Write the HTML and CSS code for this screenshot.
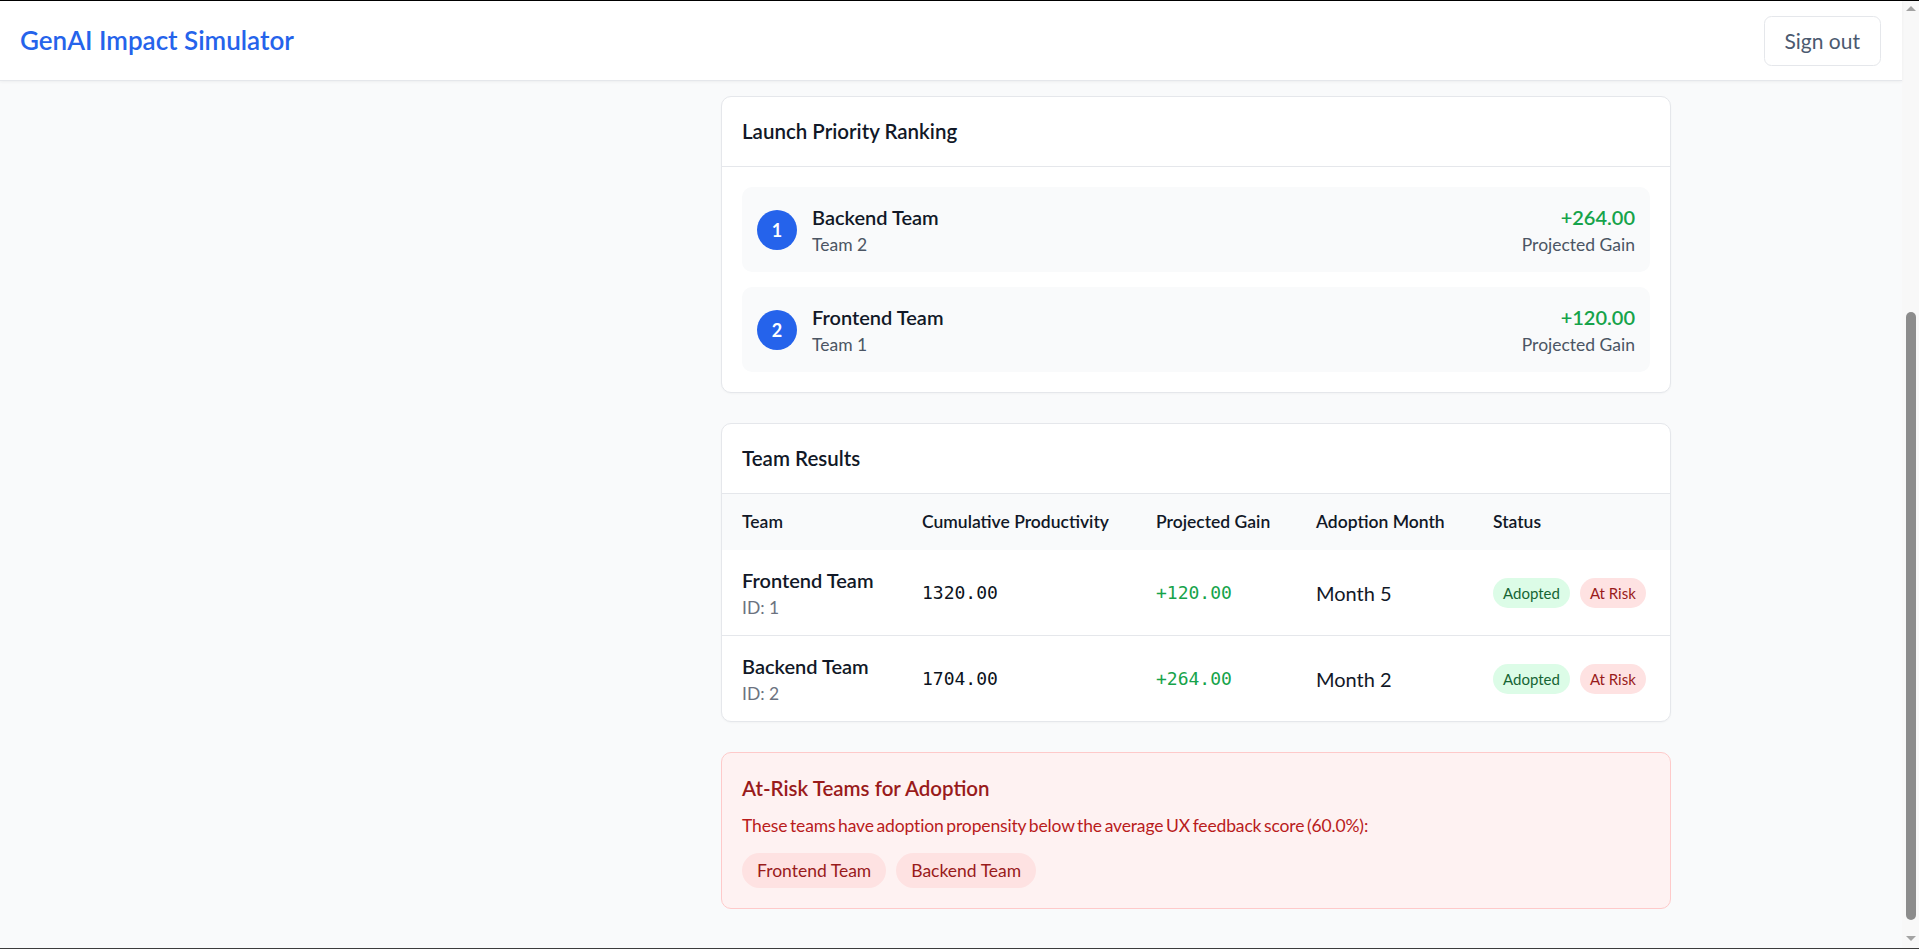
FILE: index.html
```html
<!DOCTYPE html>
<html lang="en">
<head>
<meta charset="utf-8">
<title>GenAI Impact Simulator</title>
<link rel="stylesheet" href="styles.css">
</head>
<body>
<div class="window">
  <div class="viewport">
    <header class="topbar">
      <h1 class="brand">GenAI Impact Simulator</h1>
      <button class="signout" type="button">Sign out</button>
    </header>
    <main class="page">
      <div class="layout">
        <aside class="sidebar"></aside>
        <section class="results">
          <div class="card">
            <div class="card-head"><h2>Launch Priority Ranking</h2></div>
            <div class="card-body">
              <div class="rank-item">
                <div class="rank-left">
                  <span class="rank-num">1</span>
                  <div>
                    <div class="rank-name">Backend Team</div>
                    <div class="rank-sub">Team 2</div>
                  </div>
                </div>
                <div class="rank-right">
                  <div class="gain">+264.00</div>
                  <div class="rank-sub">Projected Gain</div>
                </div>
              </div>
              <div class="rank-item">
                <div class="rank-left">
                  <span class="rank-num">2</span>
                  <div>
                    <div class="rank-name">Frontend Team</div>
                    <div class="rank-sub">Team 1</div>
                  </div>
                </div>
                <div class="rank-right">
                  <div class="gain">+120.00</div>
                  <div class="rank-sub">Projected Gain</div>
                </div>
              </div>
            </div>
          </div>

          <div class="card">
            <div class="card-head"><h2>Team Results</h2></div>
            <table class="results-table">
              <colgroup>
                <col class="c-team"><col class="c-prod"><col class="c-gain"><col class="c-month"><col class="c-status">
              </colgroup>
              <thead>
                <tr>
                  <th>Team</th>
                  <th>Cumulative Productivity</th>
                  <th>Projected Gain</th>
                  <th>Adoption Month</th>
                  <th>Status</th>
                </tr>
              </thead>
              <tbody>
                <tr>
                  <td><div class="team-name">Frontend Team</div><div class="team-id">ID: 1</div></td>
                  <td class="mono">1320.00</td>
                  <td class="mono pos">+120.00</td>
                  <td class="month">Month 5</td>
                  <td><div class="badges"><span class="badge badge-ok">Adopted</span><span class="badge badge-risk">At Risk</span></div></td>
                </tr>
                <tr>
                  <td><div class="team-name">Backend Team</div><div class="team-id">ID: 2</div></td>
                  <td class="mono">1704.00</td>
                  <td class="mono pos">+264.00</td>
                  <td class="month">Month 2</td>
                  <td><div class="badges"><span class="badge badge-ok">Adopted</span><span class="badge badge-risk">At Risk</span></div></td>
                </tr>
              </tbody>
            </table>
          </div>

          <div class="risk-box">
            <h3 class="risk-title">At-Risk Teams for Adoption</h3>
            <p class="risk-text">These teams have adoption propensity below the average UX feedback score (60.0%):</p>
            <div class="chips">
              <span class="chip">Frontend Team</span>
              <span class="chip">Backend Team</span>
            </div>
          </div>
        </section>
      </div>
    </main>
  </div>
  <div class="scrollbar">
    <span class="sb-up"></span>
    <span class="sb-thumb"></span>
    <span class="sb-down"></span>
  </div>
</div>
</body>
</html>
```

FILE: styles.css
```css
html, body {
  margin: 0;
  padding: 0;
  height: 100%;
}

body {
  font-family: "Lato", "Noto Sans", sans-serif;
  color: #111827;
  background: #f9fafb;
}

.window {
  display: flex;
  height: 949px;
  box-sizing: border-box;
  border-top: 1px solid #000;
  border-bottom: 1px solid #3c3c3c;
  overflow: hidden;
}

.viewport {
  flex: 1;
  min-width: 0;
  display: flex;
  flex-direction: column;
  background: #f9fafb;
}

.topbar {
  height: 80px;
  box-sizing: border-box;
  flex-shrink: 0;
  display: flex;
  align-items: center;
  justify-content: space-between;
  padding: 0 21px 0 20px;
  background: #fff;
  border-bottom: 1px solid #e5e7eb;
  box-shadow: 0 1px 3px rgba(0, 0, 0, 0.05);
  position: relative;
  z-index: 1;
}

.brand {
  margin: 0;
  font-size: 26px;
  line-height: 35px;
  font-weight: 600;
  color: #2563eb;
}

.signout {
  font-family: inherit;
  font-size: 21px;
  line-height: 30px;
  padding: 9px 20px;
  border: 1px solid #e5e7eb;
  border-radius: 7.5px;
  background: #fff;
  color: #4b5a70;
}

.page {
  flex: 1;
  padding: 15px 0 40px;
}

.layout {
  max-width: 1440px;
  margin: 0 auto;
  display: grid;
  grid-template-columns: repeat(3, 1fr);
  gap: 30px;
}

.results {
  grid-column: span 2;
  display: flex;
  flex-direction: column;
  gap: 30px;
}

.card {
  background: #fff;
  border: 1px solid #e5e7eb;
  border-radius: 10px;
  box-shadow: 0 1px 2px rgba(0, 0, 0, 0.03);
  overflow: hidden;
}

.card-head {
  padding: 19px 20px 20px;
  border-bottom: 1px solid #e5e7eb;
}

.card-head h2 {
  margin: 0;
  font-size: 20.5px;
  line-height: 30px;
  font-weight: 600;
  color: #111827;
}

.card-body {
  padding: 20px;
  display: flex;
  flex-direction: column;
  gap: 15px;
}

.rank-item {
  display: flex;
  align-items: center;
  justify-content: space-between;
  padding: 15px;
  background: #f9fafb;
  border-radius: 10px;
}

.rank-left {
  display: flex;
  align-items: center;
  gap: 15px;
}

.rank-num {
  width: 40px;
  height: 40px;
  border-radius: 50%;
  background: #2563eb;
  color: #fff;
  display: flex;
  align-items: center;
  justify-content: center;
  font-size: 18px;
  font-weight: 700;
}

.rank-name {
  font-size: 20px;
  line-height: 30px;
  font-weight: 600;
  color: #111827;
}

.rank-sub {
  font-size: 17.5px;
  line-height: 25px;
  color: #4b5563;
}

.rank-right {
  text-align: right;
}

.gain {
  font-size: 20px;
  line-height: 30px;
  font-weight: 600;
  color: #16a34a;
}

.results-table {
  width: 100%;
  border-collapse: collapse;
  table-layout: fixed;
}

.c-team { width: 180px; }
.c-prod { width: 234px; }
.c-gain { width: 160px; }
.c-month { width: 177px; }
.c-status { width: 197px; }

.results-table th {
  background: #f9fafb;
  text-align: left;
  font-size: 17.5px;
  line-height: 25px;
  font-weight: 600;
  color: #111827;
  padding: 15px 20px 16px;
  white-space: nowrap;
}

.results-table td {
  padding: 15px 20px;
  vertical-align: middle;
  white-space: nowrap;
}

.results-table tbody tr + tr td {
  border-top: 1px solid #e5e7eb;
}

.team-name {
  font-size: 20px;
  line-height: 30px;
  font-weight: 600;
  color: #111827;
}

.team-id {
  font-size: 17.5px;
  line-height: 25px;
  color: #6b7280;
}

.mono {
  font-family: "DejaVu Sans Mono", "Liberation Mono", monospace;
  font-size: 18px;
  color: #0b1220;
}

.mono.pos {
  color: #16a34a;
}

.month {
  font-size: 20px;
  color: #111827;
}

.badges {
  display: flex;
  gap: 10px;
}

.badge {
  font-size: 15px;
  line-height: 20px;
  padding: 5px 10px;
  border-radius: 999px;
}

.badge-ok {
  background: #dcfce7;
  color: #166534;
}

.badge-risk {
  background: #fee2e2;
  color: #991b1b;
}

.risk-box {
  background: #fef2f2;
  border: 1px solid #fecaca;
  border-radius: 10px;
  padding: 20px;
}

.risk-title {
  margin: 0;
  font-size: 20.5px;
  line-height: 30px;
  font-weight: 600;
  color: #991b1b;
}

.risk-text {
  margin: 10px 0 0;
  font-size: 17.5px;
  line-height: 25px;
  letter-spacing: -0.15px;
  word-spacing: -1.6px;
  color: #b91c1c;
}

.chips {
  display: flex;
  gap: 10px;
  margin-top: 15px;
}

.chip {
  font-size: 17.5px;
  line-height: 25px;
  padding: 5px 15px;
  border-radius: 999px;
  background: #fee2e2;
  color: #991b1b;
}

.scrollbar {
  width: 17px;
  flex-shrink: 0;
  display: flex;
  flex-direction: column;
  align-items: center;
  background: #f8f8f8;
}

.sb-up {
  margin-top: 5px;
  width: 0;
  height: 0;
  border-left: 5px solid transparent;
  border-right: 5px solid transparent;
  border-bottom: 5px solid #a3a3a3;
}

.sb-thumb {
  margin-top: 301px;
  width: 10px;
  height: 608px;
  border-radius: 5px;
  background: #8c8c8c;
}

.sb-down {
  margin-top: auto;
  margin-bottom: 7px;
  width: 0;
  height: 0;
  border-left: 5px solid transparent;
  border-right: 5px solid transparent;
  border-top: 5px solid #a3a3a3;
}
```
